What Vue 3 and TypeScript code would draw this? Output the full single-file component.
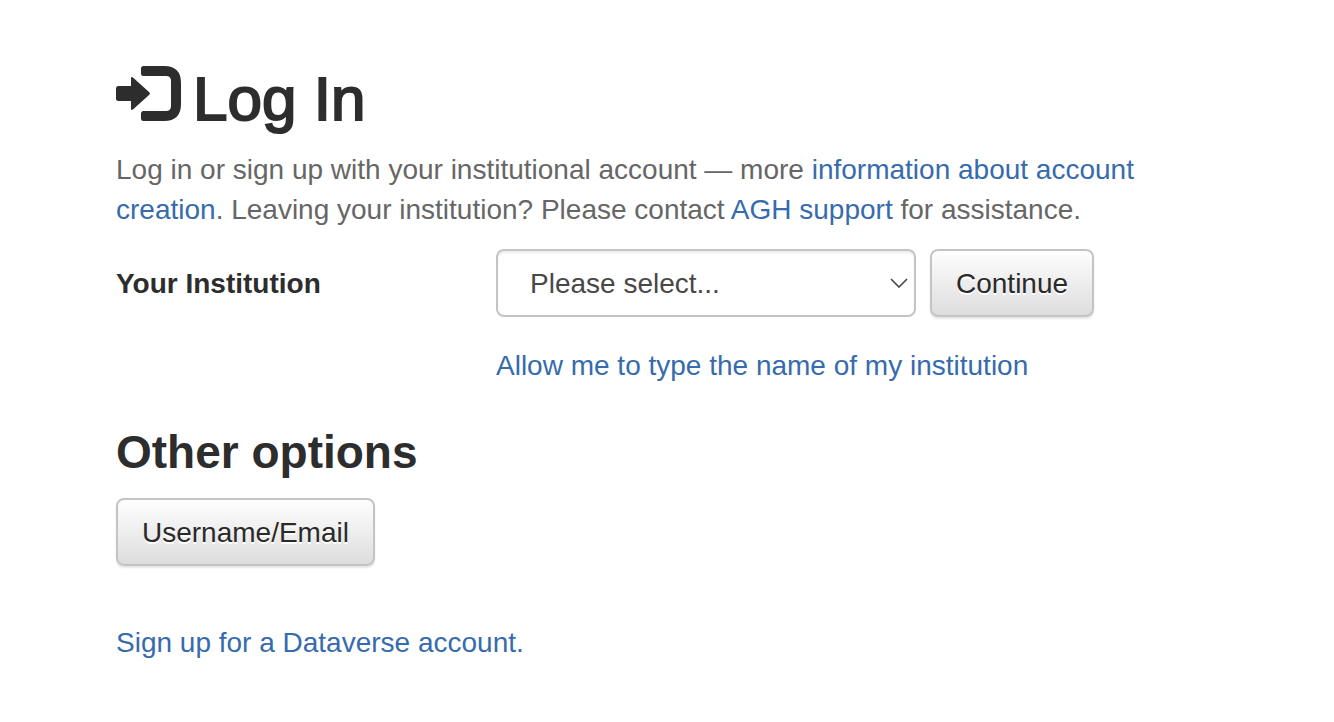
<script setup lang="ts">
import { ref } from 'vue'

const institution = ref('')
</script>

<template>
  <main class="page">
    <h1 class="title">
      <svg class="icon" viewBox="0 0 65 55" aria-hidden="true">
        <path d="M0 22.500Q0 20 2.500 20H15V12.500Q15 10 17.200 11.800L33.300 26.200Q34.700 27.500 33.300 28.800L17.200 43.200Q15 45 15 42.500V35H2.500Q0 35 0 32.500Z" />
        <path d="M27.500 0H48Q65 0 65 17V38Q65 55 48 55H27.500Q25 55 25 52.500V47.500Q25 45 27.500 45H50Q55 45 55 40V15Q55 10 50 10H27.500Q25 10 25 7.500V2.500Q25 0 27.500 0Z" />
      </svg>
      <span>Log In</span>
    </h1>
    <p class="intro">
      Log in or sign up with your institutional account — more
      <a href="#">information about account creation</a>. Leaving your institution? Please contact
      <a href="#">AGH support</a> for assistance.
    </p>
    <form class="row" @submit.prevent>
      <label class="label" for="institution">Your Institution</label>
      <div class="field">
        <div class="controls">
          <div class="select-wrap">
            <select id="institution" v-model="institution" class="select">
              <option value="">Please select...</option>
            </select>
            <svg class="chevron" viewBox="0 0 18 10" aria-hidden="true">
              <path d="M1 1l8 8 8-8" />
            </svg>
          </div>
          <button class="btn" type="submit">Continue</button>
        </div>
        <a class="type-link" href="#">Allow me to type the name of my institution</a>
      </div>
    </form>
    <h2 class="subtitle">Other options</h2>
    <button class="btn" type="button">Username/Email</button>
    <p class="signup"><a href="#">Sign up for a Dataverse account.</a></p>
  </main>
</template>

<style>
body {
  background: #fff;
}
</style>

<style scoped>
.page {
  box-sizing: border-box;
  padding: 66px 116px 40px;
  font-family: "Helvetica Neue", Helvetica, "Liberation Sans", Arial, sans-serif;
  font-size: 28px;
  line-height: 40px;
  color: #2d2d2d;
}
a {
  color: #366bad;
  text-decoration: none;
}
.title {
  display: flex;
  align-items: flex-start;
  gap: 12px;
  margin: 0 0 18px;
  font-size: 62px;
  font-weight: 500;
  line-height: 66px;
  -webkit-text-stroke: 2px #2d2d2d;
}
.icon {
  width: 65px;
  height: 55px;
  fill: #2d2d2d;
}
.intro {
  margin: 0 0 19px;
  color: #666;
}
.row {
  display: flex;
}
.label {
  flex: 0 0 380px;
  font-weight: 700;
  line-height: 70px;
}
.field {
  flex: 1;
}
.controls {
  display: flex;
  gap: 14px;
  margin-bottom: 29px;
}
.select-wrap {
  position: relative;
  width: 420px;
}
.select {
  box-sizing: border-box;
  width: 100%;
  height: 68px;
  padding: 2px 48px 0 32px;
  border: 2px solid #c4c4c4;
  border-radius: 8px;
  appearance: none;
  background: #fff;
  box-shadow: inset 0 2px 2px rgba(0, 0, 0, 0.075);
  font: inherit;
  color: #484848;
}
.chevron {
  position: absolute;
  top: 29px;
  right: 8px;
  width: 18px;
  height: 10px;
  fill: none;
  stroke: #444;
  stroke-width: 1.6;
  pointer-events: none;
}
.btn {
  height: 68px;
  padding: 2px 24px 0;
  border: 2px solid #c4c4c4;
  border-radius: 8px;
  background: linear-gradient(#fff, #dcdcdc) border-box;
  box-shadow: 0 2px 2px rgba(0, 0, 0, 0.1);
  font: inherit;
  color: #2a2a2a;
  text-shadow: 0 2px 0 #fff;
}
.type-link {
  display: block;
}
.subtitle {
  margin: 40px 0 19px;
  font-size: 46px;
  font-weight: 700;
  line-height: 53px;
}
.signup {
  margin: 57px 0 0;
}
</style>
